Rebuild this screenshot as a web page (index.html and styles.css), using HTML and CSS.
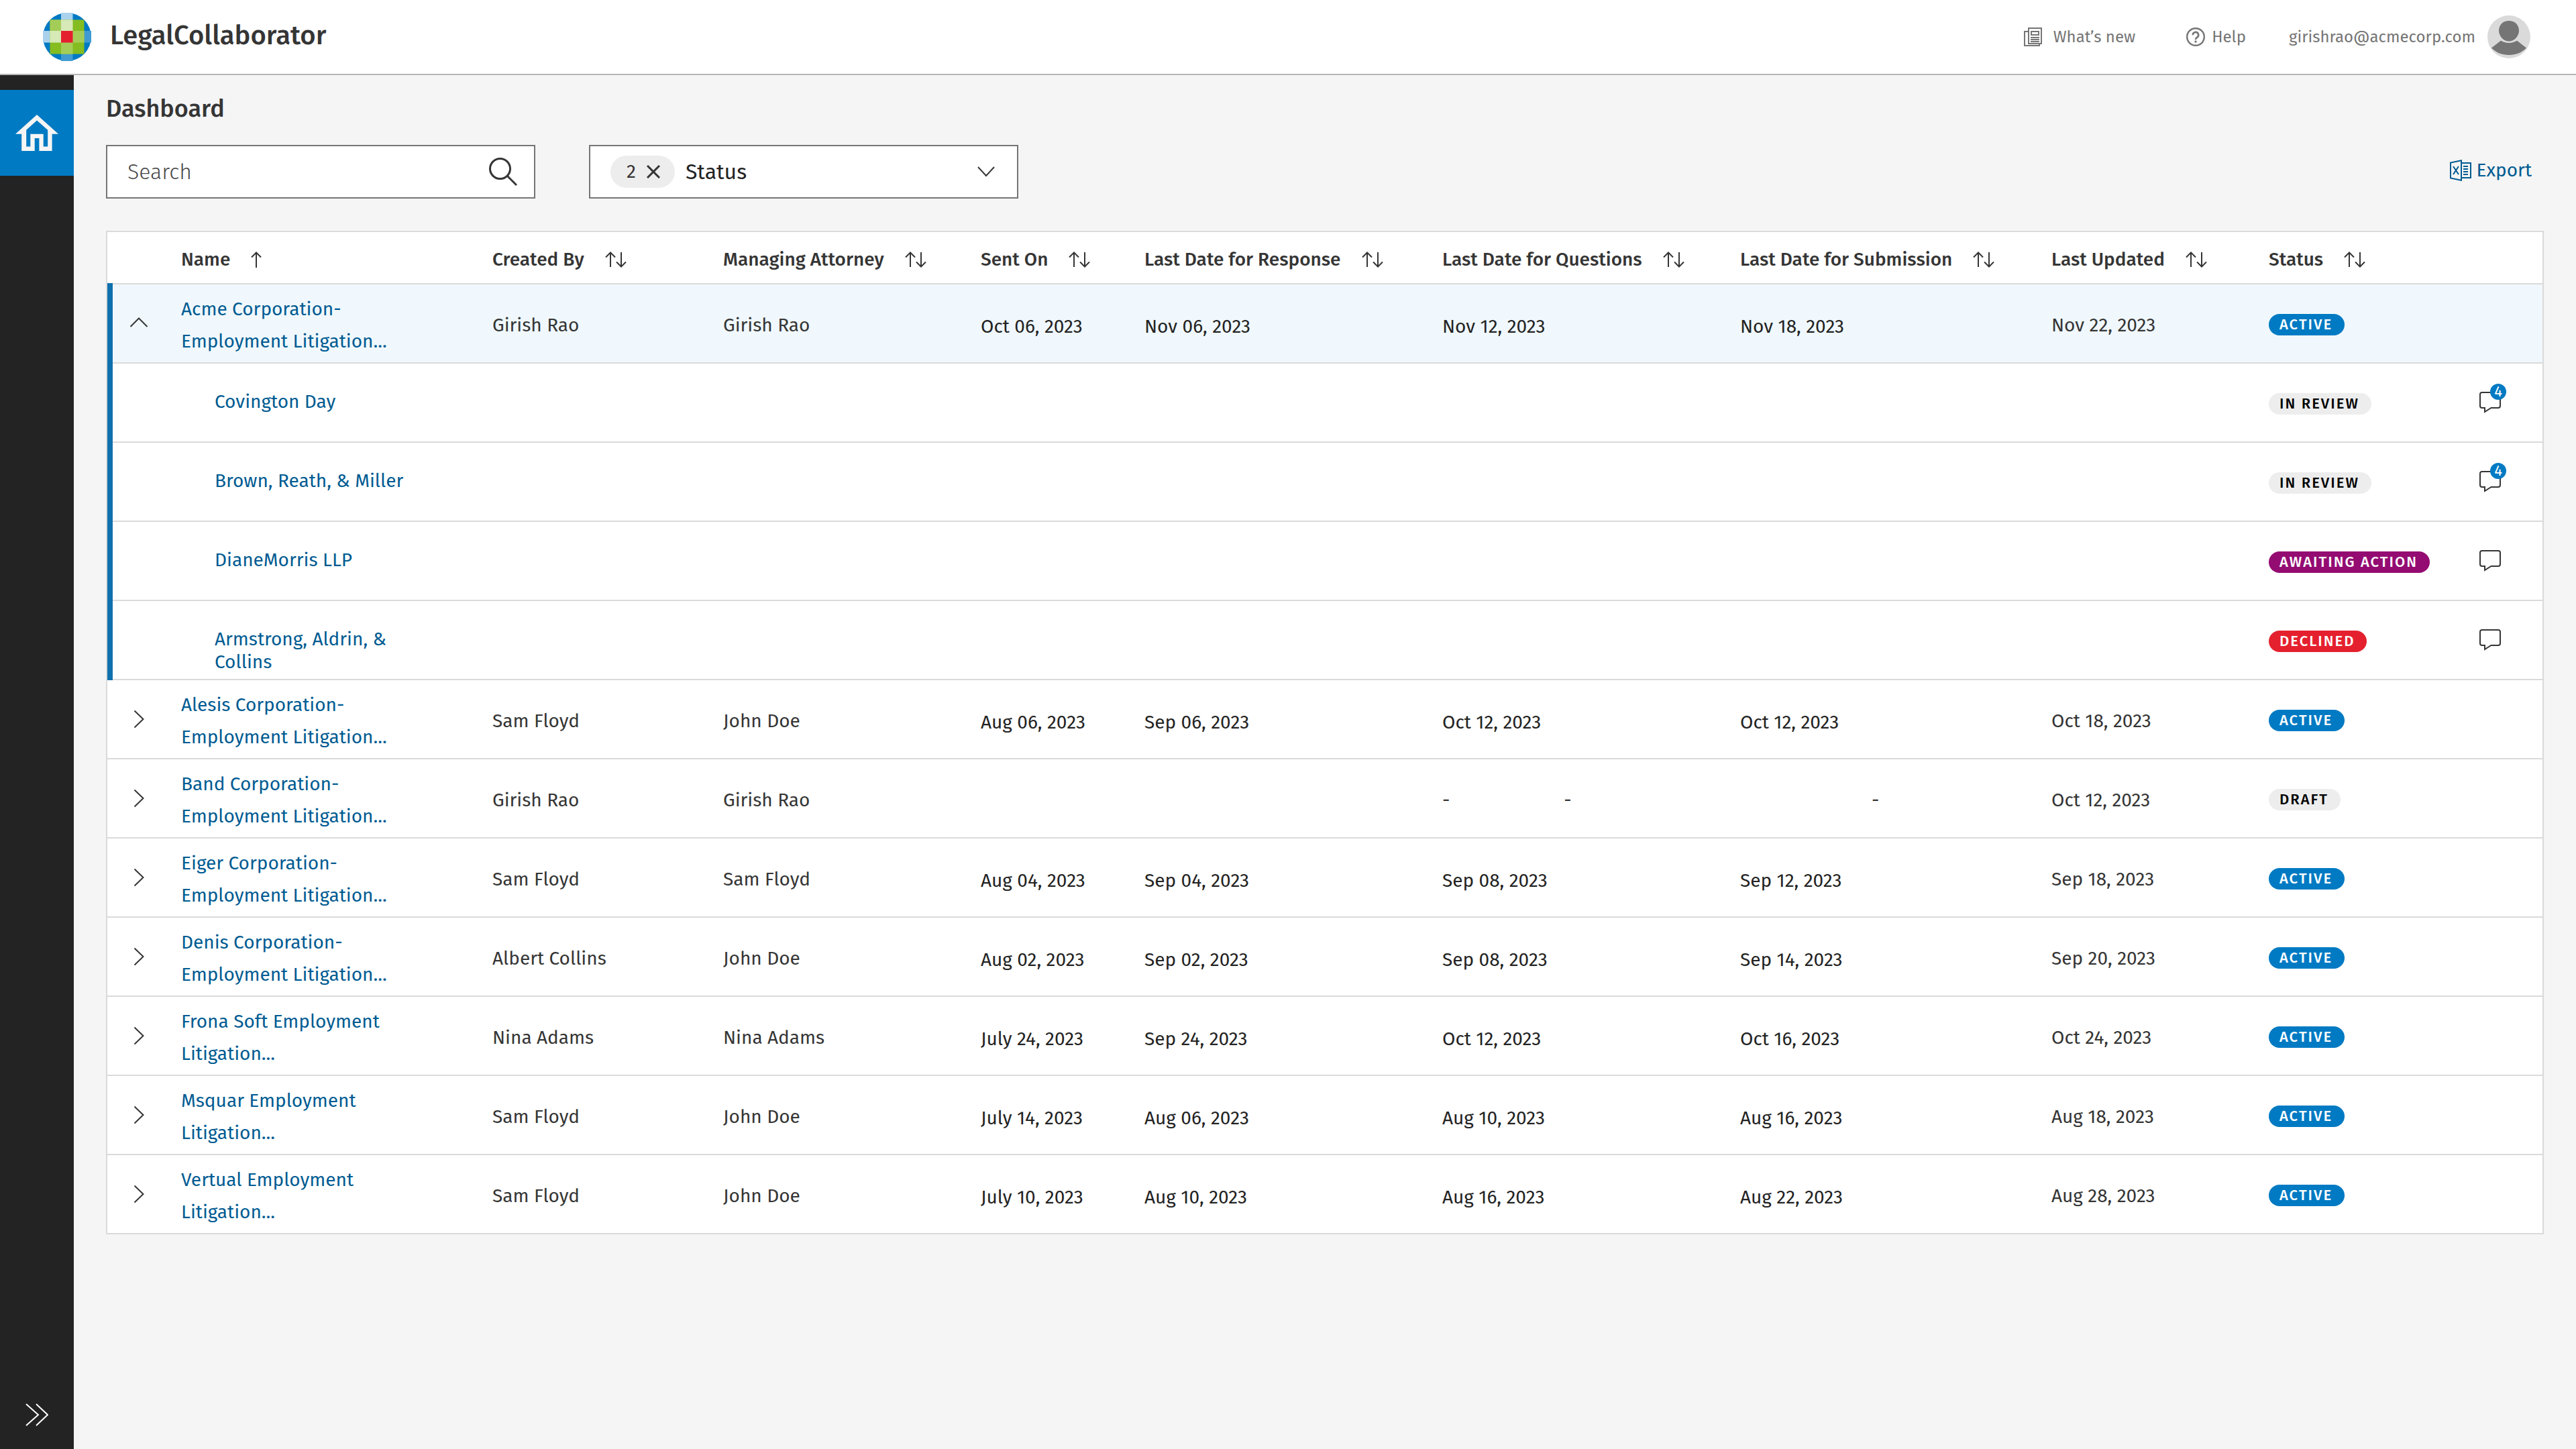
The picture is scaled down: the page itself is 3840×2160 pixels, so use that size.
FILE: index.html
```html
<!DOCTYPE html>
<html lang="en">
<head>
    <meta charset="UTF-8">
    <meta name="viewport" content="width=device-width, initial-scale=1.0">
    <title>Dashboard - LegalCollaborator</title>
    <link rel="stylesheet" href="styles.css">
</head>
<body>

<!-- shared icons -->
<svg class="sprite" aria-hidden="true">
    <symbol id="icon-up" viewBox="0 0 16 24"><path d="M8 24V1.5M1 8.5l7-7 7 7" fill="none" stroke="currentColor" stroke-width="2"/></symbol>
    <symbol id="icon-sort" viewBox="0 0 32 24"><path d="M8 23V1.5M1 8.5l7-7 7 7M24 1v21.500M17 15.500l7 7 7-7" fill="none" stroke="currentColor" stroke-width="2"/></symbol>
    <symbol id="icon-right" viewBox="0 0 28 28"><path d="M7.500 1.500L20.500 14 7.500 26.500" fill="none" stroke="currentColor" stroke-width="2"/></symbol>
    <symbol id="icon-open" viewBox="0 0 28 28"><path d="M1.500 19L14 6.500 26.500 19" fill="none" stroke="currentColor" stroke-width="2"/></symbol>
    <symbol id="icon-comment" viewBox="0 0 32 32"><path d="M4 1h24a3 3 0 0 1 3 3v17a3 3 0 0 1-3 3H17.500L8 30V24H4a3 3 0 0 1-3-3V4a3 3 0 0 1 3-3z" fill="none" stroke="currentColor" stroke-width="2"/></symbol>
</svg>

<header class="topbar">
    <a class="brand" href="#">
        <svg class="logo" viewBox="0 0 72 72" aria-hidden="true">
            <circle cx="36" cy="36" r="36" fill="#007ac3"/>
            <rect x="27" y="0" width="17.500" height="36" fill="#aad2ed"/>
            <rect x="0" y="27" width="36" height="17.500" fill="#aad2ed"/>
            <rect x="27" y="44" width="17.500" height="28" fill="#409bd2"/>
            <rect x="44" y="27" width="28" height="17.500" fill="#409bd2"/>
            <rect x="10.500" y="10.500" width="51" height="51" fill="#85bc20"/>
            <rect x="10.500" y="10.500" width="17" height="17" fill="#a4cd58"/>
            <rect x="27" y="10.500" width="17.500" height="17" fill="#d6e9b6"/>
            <rect x="10.500" y="27" width="17" height="17.500" fill="#d6e9b6"/>
            <rect x="44" y="27" width="17.500" height="17.500" fill="#a4cd58"/>
            <rect x="27" y="44" width="17.500" height="17.500" fill="#a4cd58"/>
            <rect x="27" y="27" width="17.500" height="17.500" fill="#e5202e"/>
        </svg>
        <span class="brand-name">LegalCollaborator</span>
    </a>
    <nav class="top-links">
        <a class="top-link news" href="#">
            <svg width="28" height="28" viewBox="0 0 28 28" fill="none" stroke="currentColor" stroke-width="2" aria-hidden="true">
                <path d="M7 1h19v23H7z"/>
                <path d="M7 6H1v21h22v-3"/>
                <path d="M11 6h11v5H11zM10 15h13M10 18h13M10 21h13"/>
            </svg>
            What’s new
        </a>
        <a class="top-link help" href="#">
            <svg width="28" height="28" viewBox="0 0 28 28" fill="none" stroke="currentColor" aria-hidden="true">
                <circle cx="14" cy="14" r="12.800" stroke-width="2.400"/>
                <path d="M9.800 11.200a4.200 4.200 0 1 1 6.200 3.600c-1.400.8-2 1.500-2 3.200" stroke-width="2.600"/>
                <circle cx="14" cy="21" r="1.700" fill="currentColor" stroke="none"/>
            </svg>
            Help
        </a>
        <a class="top-link account" href="#">
            girishrao@acmecorp.com
            <svg width="64" height="64" viewBox="0 0 64 64" aria-hidden="true">
                <circle cx="32" cy="32" r="32" fill="#dadada"/>
                <path d="M32 8c8.500 0 15 6 15 14.500S40 38.500 32 38.500 17 31 17 22.500 23.500 8 32 8z" fill="#757575"/>
                <path d="M20 37.500c6.500 4.500 17.500 4.500 24 0l14 11C51 55.500 42 59 32 59S13 55.500 6 48.500z" fill="#757575"/>
            </svg>
        </a>
    </nav>
</header>

<div class="layout">
    <aside class="sidebar">
        <a class="home" href="#" aria-label="Home">
            <svg width="64" height="54" viewBox="0 0 64 54" aria-hidden="true">
                <path fill="#f5f5f5" fill-rule="evenodd" d="M32 0L64 28.700H54.600V54H35.400V35H28.700V54H9.200V28.700H0zM32 8.500L16.200 22.700V47.500H22.300V28.700H41.700V47.500H48.200V22.700z"/>
            </svg>
        </a>
        <button class="expand" type="button" aria-label="Expand menu">
            <svg width="34" height="34" viewBox="0 0 34 34" fill="none" stroke="currentColor" stroke-width="2" aria-hidden="true">
                <path d="M1 1l18 16L1 33M16 1l17 16-17 16"/>
            </svg>
        </button>
    </aside>

    <main class="content">
        <h1>Dashboard</h1>

        <div class="toolbar">
            <div class="field search">
                <input type="text" placeholder="Search" aria-label="Search">
                <button type="button" aria-label="Search">
                    <svg width="42" height="42" viewBox="0 0 42 42" fill="none" stroke="currentColor" stroke-width="3" aria-hidden="true">
                        <circle cx="16.500" cy="16.500" r="15"/>
                        <path d="M27 27l14 14"/>
                    </svg>
                </button>
            </div>
            <div class="field filter">
                <span class="chip">2
                    <button type="button" aria-label="Clear filter">
                        <svg width="20" height="20" viewBox="0 0 20 20" fill="none" stroke="currentColor" stroke-width="3" aria-hidden="true"><path d="M1 1l18 18M19 1L1 19"/></svg>
                    </button>
                </span>
                <select aria-label="Status">
                    <option>Status</option>
                </select>
                <svg class="caret" width="26" height="16" viewBox="0 0 26 16" fill="none" stroke="currentColor" stroke-width="2" aria-hidden="true"><path d="M1 1l12 13L25 1"/></svg>
            </div>
            <a class="export" href="#">
                <svg width="32" height="32" viewBox="0 0 32 32" fill="none" stroke="currentColor" stroke-width="2" aria-hidden="true">
                    <path d="M17 1.200v29.600L1 27.500V4.500zM18 5h13v22H18M20 10h7M20 14h7M20 18h7M20 22h7"/>
                    <path d="M5 10l8 12M13 10L5 22"/>
                </svg>
                Export
            </a>
        </div>

        <table class="matters">
            <colgroup>
                <col class="col-toggle">
                <col class="col-name">
                <col class="col-created">
                <col class="col-attorney">
                <col class="col-sent">
                <col class="col-response">
                <col class="col-questions">
                <col class="col-submission">
                <col class="col-updated">
                <col class="col-status">
                <col class="col-comments">
            </colgroup>
            <thead>
                <tr>
                    <th></th>
                    <th><button type="button">Name <svg width="16" height="24"><use href="#icon-up"/></svg></button></th>
                    <th><button type="button">Created By <svg width="32" height="24"><use href="#icon-sort"/></svg></button></th>
                    <th><button type="button">Managing Attorney <svg width="32" height="24"><use href="#icon-sort"/></svg></button></th>
                    <th><button type="button">Sent On <svg width="32" height="24"><use href="#icon-sort"/></svg></button></th>
                    <th><button type="button">Last Date for Response <svg width="32" height="24"><use href="#icon-sort"/></svg></button></th>
                    <th><button type="button">Last Date for Questions <svg width="32" height="24"><use href="#icon-sort"/></svg></button></th>
                    <th><button type="button">Last Date for Submission <svg width="32" height="24"><use href="#icon-sort"/></svg></button></th>
                    <th><button type="button">Last Updated <svg width="32" height="24"><use href="#icon-sort"/></svg></button></th>
                    <th><button type="button">Status <svg width="32" height="24"><use href="#icon-sort"/></svg></button></th>
                    <th></th>
                </tr>
            </thead>
            <tbody class="open-group">
                <tr class="selected">
                    <td class="toggle"><button type="button" aria-label="Collapse"><svg width="28" height="28"><use href="#icon-open"/></svg></button></td>
                    <td class="name"><a href="#">Acme Corporation-<br>Employment Litigation...</a></td>
                    <td>Girish Rao</td>
                    <td>Girish Rao</td>
                    <td class="date">Oct 06, 2023</td>
                    <td class="date">Nov 06, 2023</td>
                    <td class="date">Nov 12, 2023</td>
                    <td class="date">Nov 18, 2023</td>
                    <td>Nov 22, 2023</td>
                    <td><span class="tag active">ACTIVE</span></td>
                    <td></td>
                </tr>
                <tr class="firm">
                    <td class="toggle"></td>
                    <td class="name"><a href="#">Covington Day</a></td>
                    <td colspan="7"></td>
                    <td><span class="tag">IN REVIEW</span></td>
                    <td class="comments"><button type="button" aria-label="Comments"><svg width="32" height="32"><use href="#icon-comment"/></svg><span class="count">4</span></button></td>
                </tr>
                <tr class="firm">
                    <td class="toggle"></td>
                    <td class="name"><a href="#">Brown, Reath, &amp; Miller</a></td>
                    <td colspan="7"></td>
                    <td><span class="tag">IN REVIEW</span></td>
                    <td class="comments"><button type="button" aria-label="Comments"><svg width="32" height="32"><use href="#icon-comment"/></svg><span class="count">4</span></button></td>
                </tr>
                <tr class="firm">
                    <td class="toggle"></td>
                    <td class="name"><a href="#">DianeMorris LLP</a></td>
                    <td colspan="7"></td>
                    <td><span class="tag awaiting">AWAITING ACTION</span></td>
                    <td class="comments"><button type="button" aria-label="Comments"><svg width="32" height="32"><use href="#icon-comment"/></svg></button></td>
                </tr>
                <tr class="firm">
                    <td class="toggle"></td>
                    <td class="name"><a href="#">Armstrong, Aldrin, &amp;<br>Collins</a></td>
                    <td colspan="7"></td>
                    <td><span class="tag declined">DECLINED</span></td>
                    <td class="comments"><button type="button" aria-label="Comments"><svg width="32" height="32"><use href="#icon-comment"/></svg></button></td>
                </tr>
            </tbody>
            <tbody>
                <tr>
                    <td class="toggle"><button type="button" aria-label="Expand"><svg width="28" height="28"><use href="#icon-right"/></svg></button></td>
                    <td class="name"><a href="#">Alesis Corporation-<br>Employment Litigation...</a></td>
                    <td>Sam Floyd</td>
                    <td>John Doe</td>
                    <td class="date">Aug 06, 2023</td>
                    <td class="date">Sep 06, 2023</td>
                    <td class="date">Oct 12, 2023</td>
                    <td class="date">Oct 12, 2023</td>
                    <td>Oct 18, 2023</td>
                    <td><span class="tag active">ACTIVE</span></td>
                    <td></td>
                </tr>
                <tr>
                    <td class="toggle"><button type="button" aria-label="Expand"><svg width="28" height="28"><use href="#icon-right"/></svg></button></td>
                    <td class="name"><a href="#">Band Corporation-<br>Employment Litigation...</a></td>
                    <td>Girish Rao</td>
                    <td>Girish Rao</td>
                    <td></td>
                    <td></td>
                    <td><div class="blank-pair"><span>-</span><span>-</span></div></td>
                    <td class="blank">-</td>
                    <td>Oct 12, 2023</td>
                    <td><span class="tag">DRAFT</span></td>
                    <td></td>
                </tr>
                <tr>
                    <td class="toggle"><button type="button" aria-label="Expand"><svg width="28" height="28"><use href="#icon-right"/></svg></button></td>
                    <td class="name"><a href="#">Eiger Corporation-<br>Employment Litigation...</a></td>
                    <td>Sam Floyd</td>
                    <td>Sam Floyd</td>
                    <td class="date">Aug 04, 2023</td>
                    <td class="date">Sep 04, 2023</td>
                    <td class="date">Sep 08, 2023</td>
                    <td class="date">Sep 12, 2023</td>
                    <td>Sep 18, 2023</td>
                    <td><span class="tag active">ACTIVE</span></td>
                    <td></td>
                </tr>
                <tr>
                    <td class="toggle"><button type="button" aria-label="Expand"><svg width="28" height="28"><use href="#icon-right"/></svg></button></td>
                    <td class="name"><a href="#">Denis Corporation-<br>Employment Litigation...</a></td>
                    <td>Albert Collins</td>
                    <td>John Doe</td>
                    <td class="date">Aug 02, 2023</td>
                    <td class="date">Sep 02, 2023</td>
                    <td class="date">Sep 08, 2023</td>
                    <td class="date">Sep 14, 2023</td>
                    <td>Sep 20, 2023</td>
                    <td><span class="tag active">ACTIVE</span></td>
                    <td></td>
                </tr>
                <tr>
                    <td class="toggle"><button type="button" aria-label="Expand"><svg width="28" height="28"><use href="#icon-right"/></svg></button></td>
                    <td class="name"><a href="#">Frona Soft Employment<br>Litigation...</a></td>
                    <td>Nina Adams</td>
                    <td>Nina Adams</td>
                    <td class="date">July 24, 2023</td>
                    <td class="date">Sep 24, 2023</td>
                    <td class="date">Oct 12, 2023</td>
                    <td class="date">Oct 16, 2023</td>
                    <td>Oct 24, 2023</td>
                    <td><span class="tag active">ACTIVE</span></td>
                    <td></td>
                </tr>
                <tr>
                    <td class="toggle"><button type="button" aria-label="Expand"><svg width="28" height="28"><use href="#icon-right"/></svg></button></td>
                    <td class="name"><a href="#">Msquar Employment<br>Litigation...</a></td>
                    <td>Sam Floyd</td>
                    <td>John Doe</td>
                    <td class="date">July 14, 2023</td>
                    <td class="date">Aug 06, 2023</td>
                    <td class="date">Aug 10, 2023</td>
                    <td class="date">Aug 16, 2023</td>
                    <td>Aug 18, 2023</td>
                    <td><span class="tag active">ACTIVE</span></td>
                    <td></td>
                </tr>
                <tr>
                    <td class="toggle"><button type="button" aria-label="Expand"><svg width="28" height="28"><use href="#icon-right"/></svg></button></td>
                    <td class="name"><a href="#">Vertual Employment<br>Litigation...</a></td>
                    <td>Sam Floyd</td>
                    <td>John Doe</td>
                    <td class="date">July 10, 2023</td>
                    <td class="date">Aug 10, 2023</td>
                    <td class="date">Aug 16, 2023</td>
                    <td class="date">Aug 22, 2023</td>
                    <td>Aug 28, 2023</td>
                    <td><span class="tag active">ACTIVE</span></td>
                    <td></td>
                </tr>
            </tbody>
        </table>
    </main>
</div>

</body>
</html>
```
FILE: styles.css
```css
* {
    box-sizing: border-box;
}
body {
    display: flex;
    flex-direction: column;
    min-height: 100vh;
    margin: 0;
    background-color: #f5f5f5;
    color: #353535;
    font-family: "Fira Sans", Roboto, sans-serif;
    font-size: 28px;
    line-height: 34px;
}
a {
    color: #005b92;
    text-decoration: none;
}
button {
    padding: 0;
    border: none;
    background: none;
    color: inherit;
    font: inherit;
    cursor: pointer;
}
svg {
    display: block;
    flex: none;
}
.sprite {
    position: absolute;
    width: 0;
    height: 0;
}

/* top bar */
.topbar {
    display: flex;
    align-items: center;
    justify-content: space-between;
    height: 112px;
    padding: 0 68px 0 64px;
    border-bottom: 2px solid #b5b5b5;
    background-color: #ffffff;
}
.brand {
    display: flex;
    align-items: center;
    gap: 28px;
    color: #353535;
}
.logo {
    width: 72px;
    height: 72px;
}
.brand-name {
    padding-bottom: 4px;
    font-size: 40px;
    font-weight: 500;
}
.top-links {
    display: flex;
    align-items: center;
    gap: 64px;
}
.top-link {
    display: flex;
    align-items: center;
    color: #757575;
    font-size: 24px;
}
.news {
    gap: 16px;
    margin-right: 12px;
}
.help {
    gap: 10px;
}
.account {
    gap: 18px;
}

/* side menu */
.layout {
    display: flex;
    flex: 1;
}
.sidebar {
    display: flex;
    flex: none;
    flex-direction: column;
    align-items: center;
    justify-content: space-between;
    width: 110px;
    padding: 22px 0 34px;
    background-color: #232323;
    color: #ffffff;
}
.home {
    display: flex;
    align-items: center;
    justify-content: center;
    width: 100%;
    height: 128px;
    background-color: #007ac3;
}

/* page */
.content {
    flex: 1;
    min-width: 0;
    padding: 28px 48px;
}
h1 {
    margin: 0 0 32px;
    font-size: 36px;
    font-weight: 500;
    line-height: 44px;
}
.toolbar {
    display: flex;
    align-items: center;
    gap: 80px;
    margin-bottom: 48px;
}
.field {
    display: flex;
    align-items: center;
    width: 640px;
    height: 80px;
    padding-left: 30px;
    border: 2px solid #757575;
    background-color: #ffffff;
    font-size: 32px;
}
.search {
    padding-right: 25px;
}
.search input {
    flex: 1;
    min-width: 0;
    padding: 0;
    border: none;
    outline: none;
    background: none;
    font: inherit;
    font-weight: 300;
}
.search input::placeholder {
    color: #474747;
}
.filter {
    padding-right: 33px;
}
.filter select {
    flex: 1;
    min-width: 0;
    margin-left: 16px;
    padding: 0;
    border: none;
    outline: none;
    appearance: none;
    background: none;
    color: #232323;
    font: inherit;
}
.chip {
    display: flex;
    align-items: center;
    gap: 16px;
    height: 48px;
    padding: 0 22px 0 24px;
    border-radius: 24px;
    background-color: #ededed;
    font-size: 28px;
}
.export {
    display: flex;
    align-items: center;
    gap: 8px;
    margin-left: auto;
    padding: 0 18px 4px 0;
}

/* matters table */
.matters {
    width: 100%;
    table-layout: fixed;
    border: 2px solid #dadada;
    border-bottom: none;
    border-spacing: 0;
    background-color: #ffffff;
}
.col-toggle { width: 110px; }
.col-name { width: 464px; }
.col-created { width: 344px; }
.col-attorney { width: 384px; }
.col-sent { width: 244px; }
.col-response { width: 444px; }
.col-questions { width: 444px; }
.col-submission { width: 464px; }
.col-updated { width: 324px; }
.col-status { width: 314px; }
.col-comments { width: 94px; }

th {
    height: 78px;
    padding: 6px 0 0;
    border-bottom: 2px solid #dadada;
    font-weight: 500;
    text-align: left;
    white-space: nowrap;
}
th button {
    display: flex;
    align-items: center;
    gap: 31px;
}
td {
    height: 118px;
    padding: 44px 0 0;
    border-bottom: 2px solid #dadada;
    vertical-align: top;
}
.selected td {
    background-color: #f0f8fd;
}
.toggle {
    padding-left: 33px;
}
.open-group .toggle {
    position: relative;
}
.open-group .toggle::before {
    content: "";
    position: absolute;
    top: -2px;
    bottom: -2px;
    left: 0;
    width: 8px;
    background-color: #0f70ae;
}
.name {
    padding-top: 13px;
    line-height: 48px;
}
.firm .name {
    padding-top: 40px;
    padding-left: 50px;
    line-height: 34px;
}
.date {
    padding-top: 46px;
    color: #232323;
}
.blank-pair {
    display: flex;
    gap: 170px;
}
.blank {
    padding-left: 196px;
}

.tag {
    display: block;
    width: fit-content;
    padding: 0 18px 0 16px;
    border-radius: 16px;
    background-color: #ededed;
    color: #000000;
    font-size: 22px;
    font-weight: 500;
    line-height: 32px;
    letter-spacing: 2px;
    white-space: nowrap;
}
.active {
    background-color: #007ac3;
    color: #ffffff;
}
.awaiting {
    background-color: #940c72;
    color: #ffffff;
}
.declined {
    background-color: #e5202e;
    color: #ffffff;
}

.comments {
    padding-top: 42px;
}
.comments button {
    position: relative;
    display: block;
}
.count {
    position: absolute;
    top: -12px;
    right: -8px;
    width: 24px;
    height: 24px;
    border-radius: 50%;
    background-color: #007ac3;
    color: #ffffff;
    font-size: 22px;
    line-height: 24px;
}
```
